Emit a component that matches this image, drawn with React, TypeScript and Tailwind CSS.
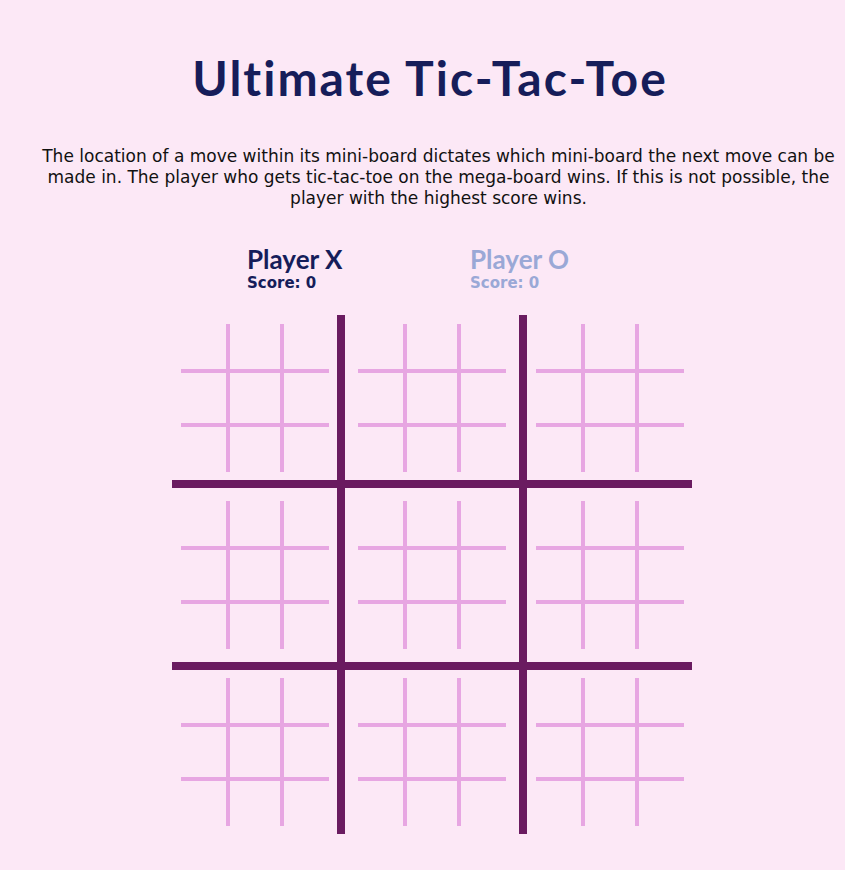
import React from 'react';

const MiniBoard = () => {
  const cells = Array.from({ length: 9 });
  return (
    <div className="grid grid-cols-[45px_58px_45px] grid-rows-[45px_58px_45px]">
      {cells.map((_, i) => {
        const row = Math.floor(i / 3);
        const col = i % 3;
        return (
          <div
            key={i}
            className={`${col === 1 ? 'border-x-4' : ''} ${row === 1 ? 'border-y-4' : ''} border-[#e7a6e2]`}
          />
        );
      })}
    </div>
  );
};

export default function App() {
  const boards = Array.from({ length: 9 });

  return (
    <div className="min-h-screen bg-[#fce8f6] text-[#161d5a] font-['DejaVu_Sans',sans-serif]">
      <div className="pt-[50px] pl-[15px]">
        <h1 className="text-center text-[48px] leading-[56px] font-bold tracking-[2px] font-['Lato',sans-serif]">
          Ultimate Tic-Tac-Toe
        </h1>
      </div>

      <p className="mt-[40px] pl-[40px] pr-[8px] text-center text-[17px] leading-[21px] text-[#111111]">
        The location of a move within its mini-board dictates which mini-board the next move can be
        <br />
        made in. The player who gets tic-tac-toe on the mega-board wins. If this is not possible, the
        <br />
        player with the highest score wins.
      </p>

      <div className="mt-[36px] flex pl-[247px]">
        <div className="w-[223px]">
          <div className="text-[26px] leading-[28px] font-bold font-['Lato',sans-serif]">Player X</div>
          <div className="text-[15px] leading-[20px] font-bold">Score: 0</div>
        </div>
        <div className="text-[#9aa8d6]">
          <div className="text-[26px] leading-[28px] font-bold font-['Lato',sans-serif]">Player O</div>
          <div className="text-[15px] leading-[20px] font-bold">Score: 0</div>
        </div>
      </div>

      <div className="mt-[22px] ml-[172px] grid w-[520px] grid-cols-[165px_190px_165px] grid-rows-[165px_190px_164px]">
        {boards.map((_, i) => {
          const row = Math.floor(i / 3);
          const col = i % 3;
          return (
            <div
              key={i}
              className={`flex items-center justify-center ${col === 1 ? 'border-x-8' : ''} ${row === 1 ? 'border-y-8' : ''} border-[#6a1b60]`}
            >
              <MiniBoard />
            </div>
          );
        })}
      </div>
    </div>
  );
}
